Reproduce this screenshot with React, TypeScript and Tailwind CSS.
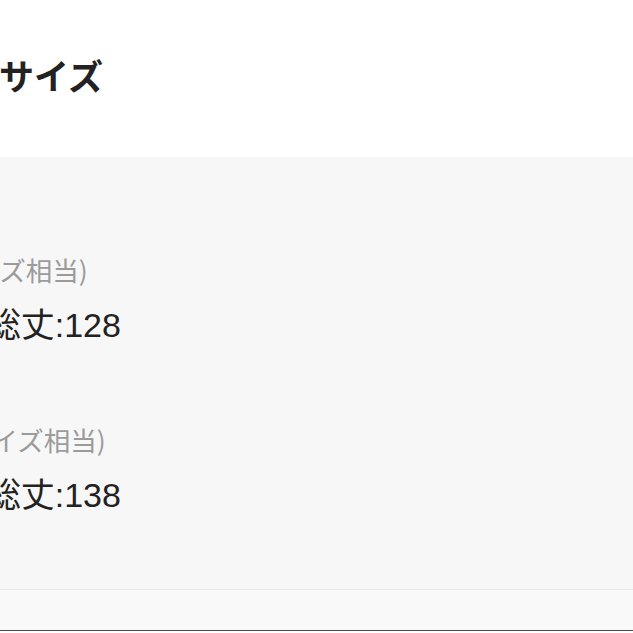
import React from 'react';

const jp = { fontFamily: '"Noto Sans CJK JP", "Noto Sans", sans-serif' };
const mixed = { fontFamily: '"Liberation Sans", "Noto Sans CJK JP", sans-serif' };

const sizes = [
  { label: '(140サイズ相当)', shift: 'ml-[-106px]', spec: '身幅:40 総丈:128' },
  { label: '(150サイズ相当)', shift: 'ml-[-88px]', spec: '身幅:43 総丈:138' },
];

export default function App() {
  return (
    <div className="w-[633px] h-[633px] overflow-hidden bg-white" style={jp}>
      {/* title */}
      <div className="h-[157px] pt-[54px] whitespace-nowrap">
        <h2 className="ml-[-71px] text-[35px] leading-[42px] font-bold text-[#222]">商品サイズ</h2>
      </div>

      {/* size list */}
      <div className="bg-[#f7f7f7] pt-[95px] pb-[74px] whitespace-nowrap">
        {sizes.map((s, i) => (
          <div key={i} className={i > 0 ? 'mt-[77px]' : ''}>
            <p className={`${s.shift} text-[26.5px] leading-[36px] text-[#9b9b9b]`}>{s.label}</p>
            <p className="mt-[17px] ml-[-138px] text-[34px] leading-[40px] text-[#222]" style={mixed}>
              {s.spec}
            </p>
          </div>
        ))}
      </div>

      <div className="h-[41px] border-t border-[#e9e9e9] bg-[#f9f9f9]" />
      <div className="h-[1px] bg-[#4a4a4a]" />
    </div>
  );
}
